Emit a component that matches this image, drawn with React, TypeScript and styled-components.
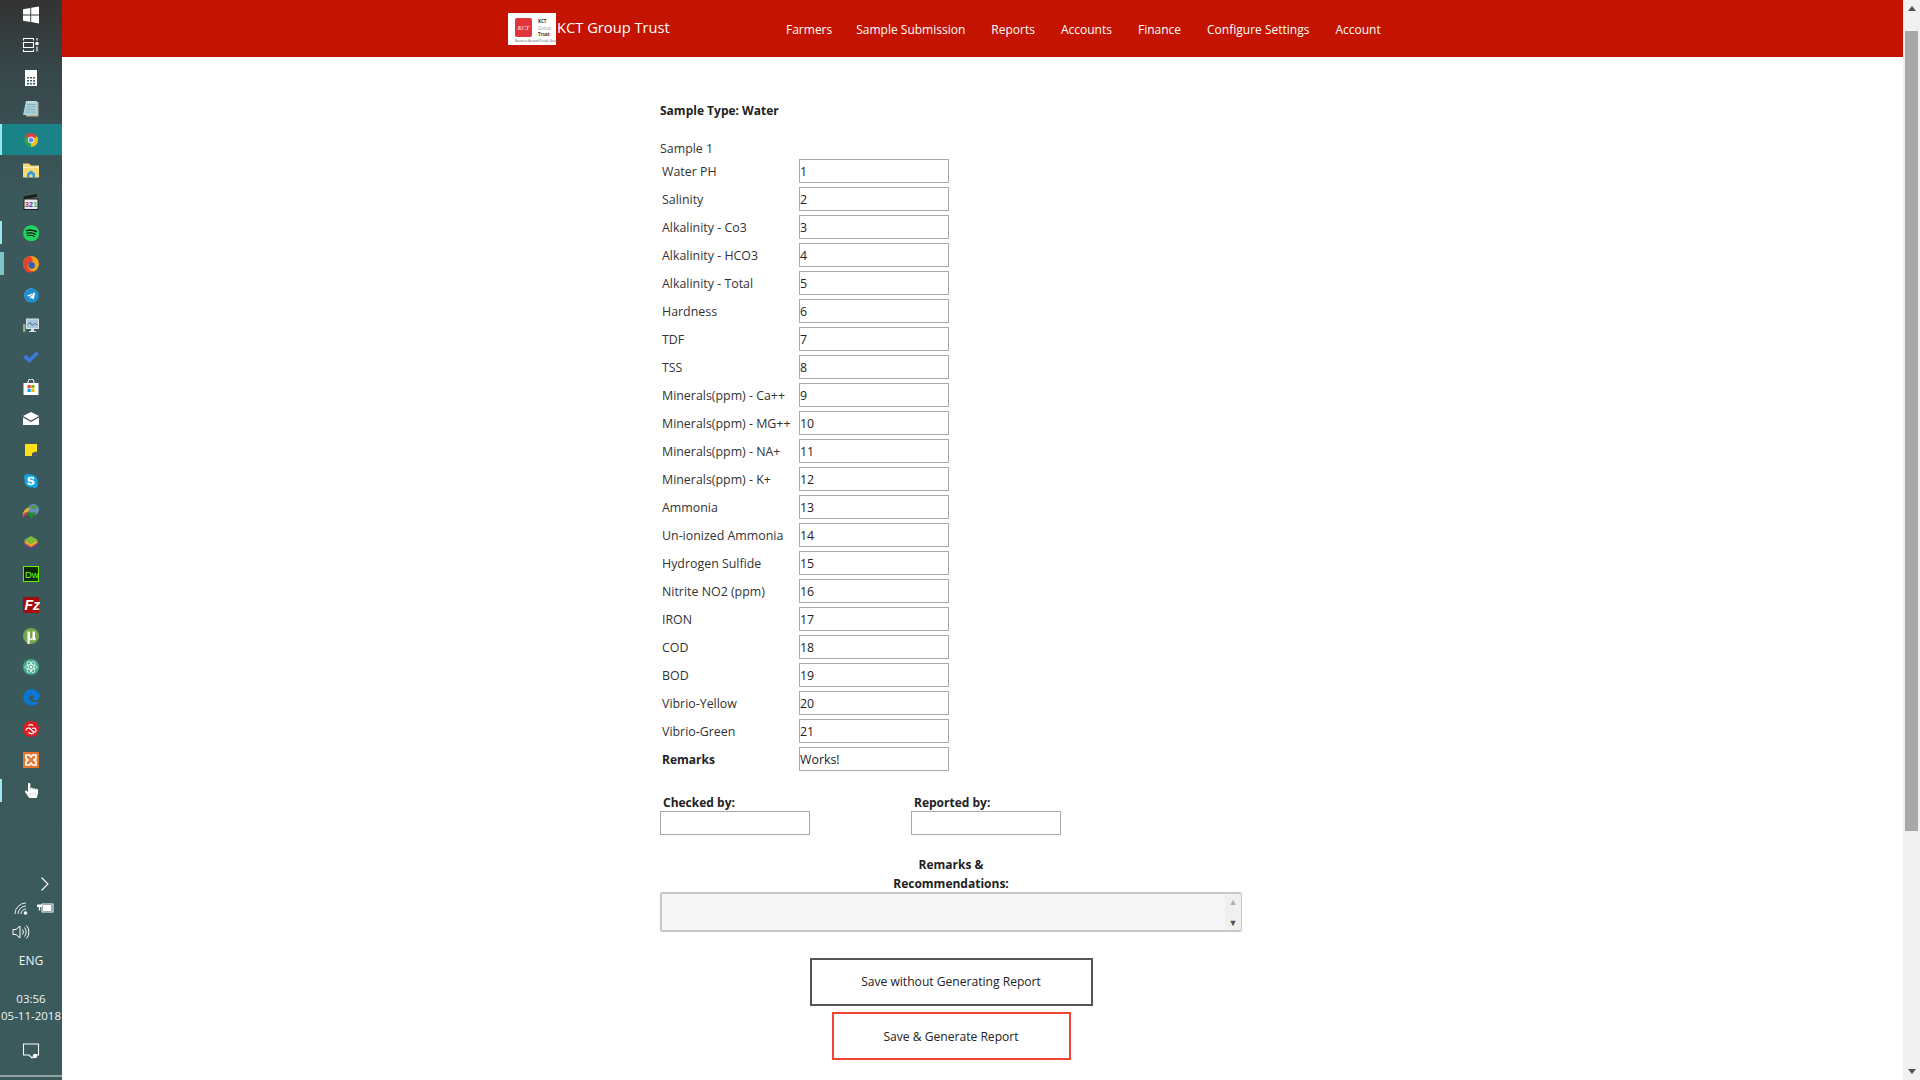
import React from "react";
import styled, { createGlobalStyle } from "styled-components";
import { FaEdge, FaHandPointer, FaSkype, FaSpotify, FaTelegram } from "react-icons/fa";

const FONT = `"Open Sans", "Noto Sans", "Liberation Sans", sans-serif`;

const GlobalStyle = createGlobalStyle`
  html, body {
    margin: 0;
    padding: 0;
    height: 100%;
    overflow: hidden;
    background: #fff;
    font-family: ${FONT};
  }
  * { box-sizing: border-box; }
`;

type Reading = { label: string; value: string; strong?: boolean };

const READINGS: Reading[] = [
  { label: "Water PH", value: "1" },
  { label: "Salinity", value: "2" },
  { label: "Alkalinity - Co3", value: "3" },
  { label: "Alkalinity - HCO3", value: "4" },
  { label: "Alkalinity - Total", value: "5" },
  { label: "Hardness", value: "6" },
  { label: "TDF", value: "7" },
  { label: "TSS", value: "8" },
  { label: "Minerals(ppm) - Ca++", value: "9" },
  { label: "Minerals(ppm) - MG++", value: "10" },
  { label: "Minerals(ppm) - NA+", value: "11" },
  { label: "Minerals(ppm) - K+", value: "12" },
  { label: "Ammonia", value: "13" },
  { label: "Un-ionized Ammonia", value: "14" },
  { label: "Hydrogen Sulfide", value: "15" },
  { label: "Nitrite NO2 (ppm)", value: "16" },
  { label: "IRON", value: "17" },
  { label: "COD", value: "18" },
  { label: "BOD", value: "19" },
  { label: "Vibrio-Yellow", value: "20" },
  { label: "Vibrio-Green", value: "21" },
  { label: "Remarks", value: "Works!", strong: true },
];

const NAV_ITEMS = ["Farmers", "Sample Submission", "Reports", "Accounts", "Finance", "Configure Settings", "Account"];

const Icon: React.FC<{ children: React.ReactNode }> = ({ children }) => (
  <svg width="18" height="18" viewBox="0 0 18 18">{children}</svg>
);

const TASKBAR_ICONS: Array<{ key: string; active?: boolean; mark?: "open" | "stacked"; icon: React.ReactNode }> = [
  {
    key: "calc",
    icon: (
      <Icon>
        <rect x="3" y="1" width="12" height="16" fill="#fff" />
        <path d="M5 8h2v1.500H5zM8 8h2v1.500H8zM11 8h2v1.500h-2zM5 11h2v1.500H5zM8 11h2v1.500H8zM11 11h2v1.500h-2zM5 14h2v1.500H5zM8 14h2v1.500H8zM11 14h2v1.500h-2z" fill="#3c5a5c" />
      </Icon>
    ),
  },
  {
    key: "notepad",
    icon: (
      <Icon>
        <path d="M5 2h11.500v14.500H4z" fill="#c8b48c" />
        <path d="M4 1h11v14H1z" fill="#a9d3dc" />
        <path d="M5 4.500h8.500M4.600 7h8.900M4 9.500h9.500M3.400 12h10.100" stroke="#7fa6b0" strokeWidth=".8" />
        <path d="M4.500 1v1.500M6.500 1v1.500M8.500 1v1.500M10.500 1v1.500M12.500 1v1.500" stroke="#e8f2f4" strokeWidth=".7" />
      </Icon>
    ),
  },
  {
    key: "chrome",
    active: true,
    icon: (
      <Icon>
        <path d="M9 9L2.940 5.500A7 7 0 0 1 15.060 5.500z" fill="#d9453a" />
        <path d="M9 9L15.060 5.500A7 7 0 0 1 9 16z" fill="#f2bd1d" />
        <path d="M9 9L9 16A7 7 0 0 1 2.940 5.500z" fill="#2f9e50" />
        <circle cx="9" cy="9" r="3.200" fill="#fff" />
        <circle cx="9" cy="9" r="2.500" fill="#5b8def" />
      </Icon>
    ),
  },
  {
    key: "explorer",
    icon: (
      <Icon>
        <path d="M1 1.500h6l2 2h8v12H1z" fill="#f6d874" />
        <path d="M1 5h16v1H1z" fill="#fff2b8" />
        <path d="M5 15.500v-4l4-3 4 3v4h-2.500v-3h-3v3z" fill="#2f9ad6" />
      </Icon>
    ),
  },
  {
    key: "mpc",
    icon: (
      <Icon>
        <path d="M1.500 3.500l13-2.500 1 2.500-13 2.500z" fill="#1c1c1c" />
        <rect x="2" y="6" width="14" height="10.500" fill="#e8e8e8" stroke="#1c1c1c" strokeWidth="1" />
        <text x="3" y="14" fontSize="7" fontWeight="700" fontFamily="Liberation Sans" fill="#a33">3</text>
        <text x="7" y="14" fontSize="7" fontWeight="700" fontFamily="Liberation Sans" fill="#33a">2</text>
        <text x="11.400" y="14" fontSize="7" fontWeight="700" fontFamily="Liberation Sans" fill="#3a3">1</text>
      </Icon>
    ),
  },
  {
    key: "spotify",
    icon: (
      <Icon>
        <circle cx="9" cy="9" r="7" fill="#111" />
        <foreignObject x="0" y="0" width="18" height="18">
          <FaSpotify size={16.5} color="#1ed760" style={{ margin: 0.75, display: "block" }} />
        </foreignObject>
      </Icon>
    ),
  },
  {
    key: "firefox",
    mark: "stacked",
    icon: (
      <Icon>
        <circle cx="9" cy="9" r="8" fill="#f9a11b" />
        <path d="M9 1a8 8 0 0 0-7.400 11L4 16.200A8 8 0 0 0 12 16.400C8 16 5 13 6 9.500 7 7 9 7 11 6 10 4 9 3 9 1z" fill="#e8412c" />
        <path d="M6.500 8c2-2 6-1.500 6.500 2 .3 2.500-2 4.500-4.500 3.500-1.500-.5-2.500-2-2-5.500z" fill="#2f5fb8" />
      </Icon>
    ),
  },
  {
    key: "telegram",
    icon: (
      <Icon>
        <circle cx="9" cy="9" r="6.500" fill="#fff" />
        <foreignObject x="0" y="0" width="18" height="18">
          <FaTelegram size={15} color="#1f8fd0" style={{ margin: 1.5, display: "block" }} />
        </foreignObject>
      </Icon>
    ),
  },
  {
    key: "taskmgr",
    icon: (
      <Icon>
        <rect x="4" y="1.500" width="13" height="10.500" fill="#d8e2e6" />
        <rect x="5" y="2.500" width="11" height="8.500" fill="#a9c7d6" />
        <path d="M5.500 8l2.500-2.500 2.500 3 2-2 3 1.500" fill="none" stroke="#2f6f9f" strokeWidth="1" />
        <path d="M9 12h3v2h2v1H7v-1h2z" fill="#d8e2e6" />
        <rect x="1" y="7" width="2.500" height="8" fill="#8fb08a" />
      </Icon>
    ),
  },
  {
    key: "todo",
    icon: (
      <Icon>
        <path d="M1 9.500l3-3 3.500 3.500L14 3.500l3 2.500-9.500 9z" fill="#3f78d8" />
      </Icon>
    ),
  },
  {
    key: "store",
    icon: (
      <Icon>
        <path d="M6 4V3a3 3 0 0 1 6 0v1" fill="none" stroke="#fff" strokeWidth="1" />
        <rect x="1.500" y="4" width="15" height="12" fill="#fff" />
        <rect x="5.500" y="6" width="3.200" height="3.200" fill="#e0492c" />
        <rect x="9.300" y="6" width="3.200" height="3.200" fill="#7fba00" />
        <rect x="5.500" y="9.800" width="3.200" height="3.200" fill="#00a4ef" />
        <rect x="9.300" y="9.800" width="3.200" height="3.200" fill="#ffb900" />
      </Icon>
    ),
  },
  {
    key: "mail",
    icon: (
      <Icon>
        <path d="M1 6l8-4 8 4-8 4.500z" fill="#fff" />
        <path d="M1 7.500l8 4.500 8-4.500V15H1z" fill="#fff" />
      </Icon>
    ),
  },
  {
    key: "sticky",
    icon: (
      <Icon>
        <rect x="3" y="3" width="12" height="12" fill="#ffe114" />
        <path d="M10 15v-3l4-1.500 1 .5v4z" fill="#4a5a60" />
      </Icon>
    ),
  },
  {
    key: "skype",
    icon: (
      <Icon>
        <circle cx="9" cy="9" r="6" fill="#fff" />
        <foreignObject x="0" y="0" width="18" height="18">
          <FaSkype size={16} color="#10a5e8" style={{ margin: 1, display: "block" }} />
        </foreignObject>
      </Icon>
    ),
  },
  {
    key: "idm",
    icon: (
      <Icon>
        <circle cx="11.500" cy="6.500" r="5.500" fill="#6b8fb8" />
        <path d="M8 4c2-2 6-2.500 7.500 0-1 2-5 3.500-7.500 0z" fill="#4f9a4d" />
        <path d="M.500 12c1-5 4-7.500 7.500-7.500L5 10.500z" fill="#e9b52f" />
        <path d="M.500 15c0-2.500 1-5 3.500-6l2 2.500c-2.500 0-3.500 1.500-5.500 3.500z" fill="#d83b6a" />
        <path d="M4 9.500h10l-4.500 6.500z" fill="#1f8a2e" />
      </Icon>
    ),
  },
  {
    key: "bluestacks",
    icon: (
      <Icon>
        <path d="M2 11l7-4 7 4-7 4.500z" fill="#3a4ca0" />
        <path d="M2 9.500l7-4 7 4-7 4.500z" fill="#e24a3a" />
        <path d="M2 8l7-4 7 4-7 4.500z" fill="#e9b52f" />
        <path d="M2 6l7-4 7 4-7 4.500z" fill="#7fb83a" />
      </Icon>
    ),
  },
  {
    key: "dreamweaver",
    icon: (
      <Icon>
        <rect x="1.500" y="1.500" width="15" height="15" fill="#0c2a05" stroke="#62f000" strokeWidth="1" />
        <text x="3" y="12.500" fontSize="9.500" fontFamily="Liberation Sans" fill="#7dff20">Dw</text>
      </Icon>
    ),
  },
  {
    key: "filezilla",
    icon: (
      <Icon>
        <rect x="1" y="1" width="16" height="16" fill="#a50a0a" />
        <text x="2.500" y="14" fontSize="14" fontStyle="italic" fontWeight="700" fontFamily="Liberation Sans" fill="#fff">Fz</text>
      </Icon>
    ),
  },
  {
    key: "utorrent",
    icon: (
      <Icon>
        <circle cx="9" cy="9" r="8" fill="#76a84a" />
        <path d="M5.500 4.500h2.500v6c0 1.500 2.500 1.500 2.500 0v-6H13v6l1 2-2.500 1-1-1.200c-1.500 1.300-2.500 1-3 .7V17H5.500z" fill="#fff" />
      </Icon>
    ),
  },
  {
    key: "atom",
    icon: (
      <Icon>
        <circle cx="9" cy="9" r="8" fill="#43a98a" />
        <g fill="none" stroke="#d8f2e8" strokeWidth=".9">
          <ellipse cx="9" cy="9" rx="6" ry="2.500" />
          <ellipse cx="9" cy="9" rx="6" ry="2.500" transform="rotate(60 9 9)" />
          <ellipse cx="9" cy="9" rx="6" ry="2.500" transform="rotate(120 9 9)" />
        </g>
        <circle cx="9" cy="9" r="1.200" fill="#fff" />
      </Icon>
    ),
  },
  { key: "edge", icon: <FaEdge size={17} color="#0a78d6" /> },
  {
    key: "creativecloud",
    icon: (
      <Icon>
        <circle cx="9" cy="9" r="8" fill="#e01b24" />
        <path d="M4 10.500c0-2 2.500-3.500 4-2l3 3c1.500 1.500 3.500 0 3-1.500-.5-2-2.500-2.500-4-1.500M6.500 5.500c1.500-1 3.500-.8 4.500.2M11.500 13c-1.500 1-3.500.8-5-.5" fill="none" stroke="#fff" strokeWidth="1.200" />
      </Icon>
    ),
  },
  {
    key: "xampp",
    icon: (
      <Icon>
        <rect x="1" y="1" width="16" height="16" rx="1" fill="#e8732a" />
        <path d="M4 4h3.500l1.500 2 1.500-2H14v3.500L12 9l2 1.500V14h-3.500L9 12l-1.500 2H4v-3.500L6 9 4 7.500z" fill="none" stroke="#fff" strokeWidth="1.700" />
      </Icon>
    ),
  },
  { key: "touch", mark: "open", icon: <FaHandPointer size={15} color="#fff" /> },
];

const App: React.FC = () => {
  return (
    <>
      <GlobalStyle />
      <Screen>
        <Sidebar>
          <SystemGroup>
            <SystemCell>
              <Icon>
                <path d="M1 3.200L8.300 2v6.500H1zM9.200 1.800L17 .6v7.900H9.200zM1 9.400h7.300v6.600L1 14.800zM9.200 9.400H17v8l-7.800-1.300z" fill="#fff" />
              </Icon>
            </SystemCell>
            <SystemCell>
              <Icon>
                <path d="M1.500 4.500v-2h10v2M1.500 13.500v2h10v-2M1.500 6.500h10v5h-10z" fill="none" stroke="#fff" strokeWidth="1.100" />
                <rect x="13.500" y="6" width="3" height="3" fill="#fff" />
                <path d="M15 2v2.500M15 10.500v5" stroke="#fff" strokeWidth="1.100" />
              </Icon>
            </SystemCell>
          </SystemGroup>
          <AppList>
            {TASKBAR_ICONS.map((item) => (
              <AppCell key={item.key} $active={item.active}>
                {item.active && <RunMark $tall />}
                {item.mark === "open" && <RunMark />}
                {item.mark === "stacked" && <RunMark $stacked />}
                {item.key === "spotify" && <RunMark />}
                {item.icon}
              </AppCell>
            ))}
          </AppList>
          <Tray>
            <ChevronRow>
              <svg width="10" height="16" viewBox="0 0 10 16">
                <path d="M1.500 1.500L8 8l-6.500 6.500" fill="none" stroke="#fff" strokeWidth="1.100" />
              </svg>
            </ChevronRow>
            <StatusRow>
              <svg width="16" height="16" viewBox="0 0 16 16">
                <path d="M1 14A11 11 0 0 1 12 3M4 14a8 8 0 0 1 8-8M7 14a5 5 0 0 1 5-5" fill="none" stroke="#e8eeee" strokeWidth="1" />
                <circle cx="11.500" cy="13" r="1.800" fill="#fff" />
              </svg>
              <svg width="18" height="14" viewBox="0 0 18 14">
                <path d="M2 1v2.500M4.500 1v2.500M1 3.500h5v2.500H4.200v3.500H2.800V6H1z" fill="#fff" />
                <rect x="6" y="3" width="11" height="8" fill="none" stroke="#fff" strokeWidth="1" />
                <rect x="7" y="4" width="8.500" height="6" fill="#fff" />
              </svg>
            </StatusRow>
            <VolumeRow>
              <svg width="18" height="16" viewBox="0 0 18 16">
                <path d="M1 5.500h3L8 2v12l-4-3.500H1z" fill="none" stroke="#fff" strokeWidth="1" />
                <path d="M10.500 5.500a4 4 0 0 1 0 5M12.500 3.500a7 7 0 0 1 0 9M14.500 1.500a10 10 0 0 1 0 13" fill="none" stroke="#fff" strokeWidth="1" />
              </svg>
            </VolumeRow>
            <Language>ENG</Language>
            <Clock>
              <span>03:56</span>
              <span>05-11-2018</span>
            </Clock>
            <NotifyRow>
              <svg width="18" height="18" viewBox="0 0 18 18">
                <path d="M1.500 2h15v11h-3.500l-3 3-3-3H1.500z" fill="none" stroke="#fff" strokeWidth="1.100" />
                <circle cx="13" cy="14" r="2.200" fill="#fff" />
              </svg>
            </NotifyRow>
            <TrayEdge />
          </Tray>
        </Sidebar>

        <Main>
          <Header>
            <Brand>
              <LogoBox>
                <LogoTop>
                  <LogoMark>KCT</LogoMark>
                  <LogoWords>
                    <span>KCT</span>
                    <LogoGrey>Group</LogoGrey>
                    <span>Trust</span>
                  </LogoWords>
                </LogoTop>
                <LogoLine>Business Around People Group</LogoLine>
              </LogoBox>
              <BrandName>KCT Group Trust</BrandName>
            </Brand>
            <Nav>
              {NAV_ITEMS.map((item) => (
                <NavLink key={item}>{item}</NavLink>
              ))}
            </Nav>
          </Header>

          <Content>
            <SampleType>Sample Type: Water</SampleType>
            <SampleTitle>Sample 1</SampleTitle>
            {READINGS.map((r) => (
              <Row key={r.label}>
                <RowLabel $strong={r.strong}>{r.label}</RowLabel>
                <TextBox defaultValue={r.value} />
              </Row>
            ))}

            <SignOff>
              <SignField>
                <SignLabel>Checked by:</SignLabel>
                <TextBox />
              </SignField>
              <SignField>
                <SignLabel>Reported by:</SignLabel>
                <TextBox />
              </SignField>
            </SignOff>

            <NotesTitle>
              Remarks &amp;
              <br />
              Recommendations:
            </NotesTitle>
            <NotesBox>
              <NotesInput />
              <NotesScroll>
                <NotesArrow $dim>▲</NotesArrow>
                <NotesArrow>▼</NotesArrow>
              </NotesScroll>
            </NotesBox>

            <Actions>
              <ActionButton type="button" $wide>Save without Generating Report</ActionButton>
              <ActionButton type="button" $danger>Save &amp; Generate Report</ActionButton>
            </Actions>
          </Content>
        </Main>

        <Scrollbar>
          <ScrollArrow>
            <svg width="8" height="5" viewBox="0 0 8 5"><path d="M4 0l4 5H0z" fill="#505050" /></svg>
          </ScrollArrow>
          <ScrollThumb />
          <ScrollSpace />
          <ScrollArrow>
            <svg width="8" height="5" viewBox="0 0 8 5"><path d="M0 0h8L4 5z" fill="#505050" /></svg>
          </ScrollArrow>
        </Scrollbar>
      </Screen>
    </>
  );
};

export default App;

const Screen = styled.div`
  display: flex;
  width: 1920px;
  height: 1080px;
  overflow: hidden;
`;

const Sidebar = styled.aside`
  width: 62px;
  flex: none;
  display: flex;
  flex-direction: column;
  background: linear-gradient(180deg, #333333 0, #37474a 70px, #3b585a 190px, #3a5a5b 100%);
  color: #fff;
`;

const SystemGroup = styled.div`
  display: flex;
  flex-direction: column;
  height: 62px;
`;

const SystemCell = styled.div`
  height: 30px;
  display: flex;
  align-items: center;
  justify-content: center;
`;

const AppList = styled.div`
  display: flex;
  flex-direction: column;
`;

const AppCell = styled.div<{ $active?: boolean }>`
  position: relative;
  height: 31px;
  display: flex;
  align-items: center;
  justify-content: center;
  background: ${(p) => (p.$active ? "#1a8389" : "transparent")};
`;

const RunMark = styled.i<{ $tall?: boolean; $stacked?: boolean }>`
  position: absolute;
  left: 0;
  top: ${(p) => (p.$tall ? "0" : "4px")};
  bottom: ${(p) => (p.$tall ? "0" : "4px")};
  width: ${(p) => (p.$stacked ? "4px" : "2px")};
  background: ${(p) => (p.$stacked ? "#7fc4c8" : "#9be6ea")};
`;

const Tray = styled.div`
  margin-top: auto;
  display: flex;
  flex-direction: column;
  padding-bottom: 3px;
`;

const ChevronRow = styled.div`
  height: 20px;
  display: flex;
  justify-content: flex-end;
  align-items: center;
  padding-right: 12px;
`;

const StatusRow = styled.div`
  height: 20px;
  margin-top: 4px;
  display: flex;
  align-items: center;
  justify-content: space-between;
  padding: 0 8px 0 14px;
`;

const VolumeRow = styled.div`
  height: 20px;
  margin-top: 4px;
  display: flex;
  align-items: center;
  padding-left: 12px;
`;

const Language = styled.div`
  margin-top: 9px;
  height: 20px;
  line-height: 20px;
  text-align: center;
  font-size: 12px;
  color: #f2f5f5;
`;

const Clock = styled.div`
  margin-top: 19px;
  display: flex;
  flex-direction: column;
  align-items: center;
  font-size: 11.500px;
  line-height: 17px;
  color: #f2f5f5;
  white-space: nowrap;
`;

const NotifyRow = styled.div`
  margin-top: 15px;
  height: 24px;
  display: flex;
  align-items: center;
  justify-content: center;
`;

const TrayEdge = styled.div`
  margin-top: 12px;
  height: 2px;
  background: #8fa5a6;
`;

const Main = styled.div`
  flex: 1;
  min-width: 0;
  display: flex;
  flex-direction: column;
`;

const Header = styled.header`
  height: 57px;
  flex: none;
  display: flex;
  align-items: flex-start;
  padding-left: 446px;
  background: #c41300;
  color: #fff;
`;

const Brand = styled.div`
  display: flex;
  align-items: center;
  margin-top: 13px;
  width: 278px;
`;

const LogoBox = styled.div`
  width: 48px;
  height: 32px;
  background: #fff;
  display: flex;
  flex-direction: column;
  padding: 5px 0 0 7px;
  flex: none;
`;

const LogoTop = styled.div`
  display: flex;
  gap: 6px;
  height: 20px;
`;

const LogoMark = styled.div`
  width: 17px;
  height: 19px;
  border-radius: 2px;
  background: #e0353a;
  color: #fff;
  font-size: 6px;
  font-style: italic;
  font-family: "Liberation Serif", serif;
  display: flex;
  align-items: center;
  justify-content: center;
`;

const LogoWords = styled.div`
  display: flex;
  flex-direction: column;
  font-size: 4.500px;
  font-weight: 700;
  line-height: 6.500px;
  color: #333;
`;

const LogoGrey = styled.span`
  color: #999;
  font-weight: 400;
`;

const LogoLine = styled.div`
  margin-top: 1px;
  font-size: 3px;
  line-height: 4px;
  color: #555;
  white-space: nowrap;
`;

const BrandName = styled.div`
  margin-left: 1px;
  font-size: 14.700px;
  line-height: 22px;
  margin-bottom: 4px;
  white-space: nowrap;
`;

const Nav = styled.nav`
  display: flex;
  gap: 26px;
  height: 57px;
  padding-top: 2px;
  align-items: center;
`;

const NavLink = styled.a`
  font-size: 12px;
  line-height: 18px;
  color: #fff;
  white-space: nowrap;

  &:first-child {
    margin-right: -2px;
  }
`;

const Content = styled.main`
  width: 582px;
  margin-left: 598px;
  display: flex;
  flex-direction: column;
  color: #333;
  font-size: 12.400px;
  line-height: 19px;
`;

const SampleType = styled.h4`
  margin: 44px 0 0;
  font-size: 12px;
  line-height: 20px;
  font-weight: 700;
  color: #222;
`;

const SampleTitle = styled.div`
  margin-top: 18px;
  height: 20px;
  line-height: 20px;
`;

const Row = styled.div`
  display: flex;
  align-items: center;
  height: 24px;
  margin-bottom: 4px;
`;

const RowLabel = styled.label<{ $strong?: boolean }>`
  width: 139px;
  padding-left: 2px;
  flex: none;
  font-size: ${(p) => (p.$strong ? "12px" : "inherit")};
  font-weight: ${(p) => (p.$strong ? 700 : 400)};
  color: ${(p) => (p.$strong ? "#222" : "#333")};
  white-space: nowrap;
`;

const TextBox = styled.input`
  width: 150px;
  height: 24px;
  padding: 0;
  border: 1px solid #a9a9a9;
  border-radius: 0;
  background: #fff;
  color: #222;
  font: 12.400px ${FONT};
  outline: none;
`;

const SignOff = styled.div`
  display: flex;
  margin-top: 18px;
`;

const SignField = styled.div`
  width: 251px;
  display: flex;
  flex-direction: column;
`;

const SignLabel = styled.label`
  padding: 1px 0 0 3px;
  height: 18px;
  line-height: 18px;
  font-size: 12px;
  font-weight: 700;
  color: #222;
`;

const NotesTitle = styled.div`
  margin-top: 20px;
  text-align: center;
  font-size: 12px;
  font-weight: 700;
  color: #222;
`;

const NotesBox = styled.div`
  display: flex;
  height: 40px;
  margin-top: -1px;
  border: 2px solid #c8c8c8;
  border-right-width: 1px;
  border-radius: 2px;
  background: #f7f7f7;
`;

const NotesInput = styled.textarea`
  flex: 1;
  border: none;
  resize: none;
  outline: none;
  background: transparent;
`;

const NotesScroll = styled.div`
  width: 16px;
  display: flex;
  flex-direction: column;
  justify-content: space-between;
  align-items: center;
  padding: 2px 0 1px;
  background: #f0f0f0;
`;

const NotesArrow = styled.span<{ $dim?: boolean }>`
  font-size: 9px;
  line-height: 12px;
  color: ${(p) => (p.$dim ? "#b0b0b0" : "#505050")};
`;

const Actions = styled.div`
  margin-top: 26px;
  display: flex;
  flex-direction: column;
  align-items: center;
  gap: 6px;
`;

const ActionButton = styled.button<{ $wide?: boolean; $danger?: boolean }>`
  width: ${(p) => (p.$wide ? "283px" : "239px")};
  height: 48px;
  padding-top: ${(p) => (p.$danger ? "2px" : "0")};
  border: ${(p) => (p.$danger ? "2px solid #f44336" : "2px solid #555")};
  background: #fff;
  color: #222;
  font: 12.100px ${FONT};
`;

const Scrollbar = styled.div`
  width: 17px;
  flex: none;
  display: flex;
  flex-direction: column;
  align-items: center;
  background: #f0f0f0;
`;

const ScrollArrow = styled.div`
  height: 17px;
  flex: none;
  display: flex;
  align-items: center;
  justify-content: center;
`;

const ScrollThumb = styled.div`
  width: 13px;
  height: 800px;
  margin-top: 14px;
  flex: none;
  background: #a8a8a8;
`;

const ScrollSpace = styled.div`
  flex: 1;
`;
